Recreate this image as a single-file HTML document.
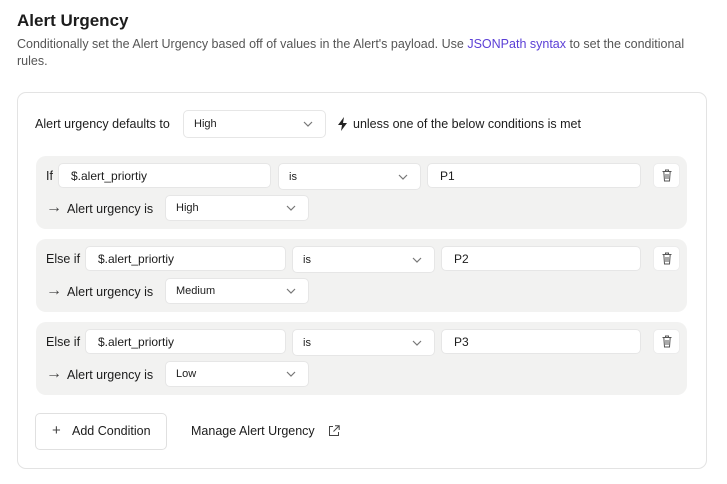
<!DOCTYPE html><html><head><meta charset="utf-8"><style>
*{box-sizing:border-box;margin:0;padding:0}
body{width:727px;height:484px;background:#fff;font-family:"Liberation Sans",sans-serif;color:#1c1c1c;position:relative;overflow:hidden}
.a{position:absolute}
.t{font-size:12.5px;white-space:nowrap}
.in{position:absolute;background:#fff;border:1px solid #e6e6e6;border-radius:5px;font-size:12px;padding-left:12px;display:flex;align-items:center}
.sel{position:absolute;background:#fff;border:1px solid #e6e6e6;border-radius:5px;font-size:11px;padding-left:10px;display:flex;align-items:center}
.sel svg{position:absolute;right:12px;top:50%;margin-top:-3px}
.box{position:absolute;left:36px;width:651px;height:73px;background:#f2f2f1;border-radius:10px}
.tr{position:absolute;width:27px;height:25px;background:#fff;border-radius:5px;border:1px solid #ececec}
.tr svg{position:absolute;left:8px;top:5px}
.ar{position:absolute;font-size:16px;color:#444;line-height:16px}
</style></head><body>
<div class="a" style="left:17px;top:11px;font-size:17px;font-weight:bold">Alert Urgency</div>
<div class="a" style="left:17px;top:36px;width:700px;font-size:12.5px;line-height:16.5px;color:#555">Conditionally set the Alert Urgency based off of values in the Alert's payload. Use <span style="color:#5b3fd6">JSONPath syntax</span> to set the conditional rules.</div>
<div class="a" style="left:17px;top:92px;width:690px;height:377px;border:1px solid #e3e3e3;border-radius:9px"></div>
<div class="a t" style="left:35px;top:117px">Alert urgency defaults to</div>
<div class="sel" style="left:183px;top:110px;width:143px;height:28px">High<svg width="10" height="6"><path d="M1 1l4 4 4-4" fill="none" stroke="#777" stroke-width="1.2"/></svg></div>
<svg class="a" style="left:337px;top:117px" width="11" height="14" viewBox="0 0 11 14"><path d="M7 0L1 8h4l-1 6 6-8H6z" fill="#222"/></svg>
<div class="a t" style="left:353px;top:117px">unless one of the below conditions is met</div>

<div class="box" style="top:156px"></div>
<div class="a t" style="left:46px;top:169px">If</div>
<div class="in" style="left:58px;top:163px;width:213px;height:25px">$.alert_priortiy</div>
<div class="sel" style="left:278px;top:163px;width:143px;height:27px">is<svg width="10" height="6"><path d="M1 1l4 4 4-4" fill="none" stroke="#777" stroke-width="1.2"/></svg></div>
<div class="in" style="left:427px;top:163px;width:214px;height:25px">P1</div>
<div class="tr" style="left:653px;top:163px"><svg width="10" height="13" viewBox="0 0 10 13"><path d="M0.5 2.5h9M3.5 2.5V1h3v1.5M1.8 2.5l.7 9.5h5l.7-9.5M4 5v5M6 5v5" fill="none" stroke="#555" stroke-width="1"/></svg></div>
<div class="ar" style="left:46px;top:200px">→</div>
<div class="a t" style="left:67px;top:202px">Alert urgency is</div>
<div class="sel" style="left:165px;top:195px;width:144px;height:26px">High<svg width="10" height="6"><path d="M1 1l4 4 4-4" fill="none" stroke="#777" stroke-width="1.2"/></svg></div>

<div class="box" style="top:239px"></div>
<div class="a t" style="left:46px;top:252px">Else if</div>
<div class="in" style="left:85px;top:246px;width:201px;height:25px">$.alert_priortiy</div>
<div class="sel" style="left:292px;top:246px;width:143px;height:27px">is<svg width="10" height="6"><path d="M1 1l4 4 4-4" fill="none" stroke="#777" stroke-width="1.2"/></svg></div>
<div class="in" style="left:441px;top:246px;width:200px;height:25px">P2</div>
<div class="tr" style="left:653px;top:246px"><svg width="10" height="13" viewBox="0 0 10 13"><path d="M0.5 2.5h9M3.5 2.5V1h3v1.5M1.8 2.5l.7 9.5h5l.7-9.5M4 5v5M6 5v5" fill="none" stroke="#555" stroke-width="1"/></svg></div>
<div class="ar" style="left:46px;top:283px">→</div>
<div class="a t" style="left:67px;top:285px">Alert urgency is</div>
<div class="sel" style="left:165px;top:278px;width:144px;height:26px">Medium<svg width="10" height="6"><path d="M1 1l4 4 4-4" fill="none" stroke="#777" stroke-width="1.2"/></svg></div>

<div class="box" style="top:322px"></div>
<div class="a t" style="left:46px;top:335px">Else if</div>
<div class="in" style="left:85px;top:329px;width:201px;height:25px">$.alert_priortiy</div>
<div class="sel" style="left:292px;top:329px;width:143px;height:27px">is<svg width="10" height="6"><path d="M1 1l4 4 4-4" fill="none" stroke="#777" stroke-width="1.2"/></svg></div>
<div class="in" style="left:441px;top:329px;width:200px;height:25px">P3</div>
<div class="tr" style="left:653px;top:329px"><svg width="10" height="13" viewBox="0 0 10 13"><path d="M0.5 2.5h9M3.5 2.5V1h3v1.5M1.8 2.5l.7 9.5h5l.7-9.5M4 5v5M6 5v5" fill="none" stroke="#555" stroke-width="1"/></svg></div>
<div class="ar" style="left:46px;top:366px">→</div>
<div class="a t" style="left:67px;top:368px">Alert urgency is</div>
<div class="sel" style="left:165px;top:361px;width:144px;height:26px">Low<svg width="10" height="6"><path d="M1 1l4 4 4-4" fill="none" stroke="#777" stroke-width="1.2"/></svg></div>

<div class="a" style="left:35px;top:413px;width:132px;height:37px;border:1px solid #e0e0e0;border-radius:5px"></div>
<div class="a t" style="left:52px;top:422px;font-size:15px;color:#444">+</div>
<div class="a t" style="left:72px;top:424px">Add Condition</div>
<div class="a t" style="left:191px;top:424px">Manage Alert Urgency</div>
<svg class="a" style="left:328px;top:425px" width="12" height="12" viewBox="0 0 12 12"><path d="M5 1.5H1.5v9h9V7M7 .8h4.2V5M11 1L5.5 6.5" fill="none" stroke="#444" stroke-width="1"/></svg>
</body></html>
